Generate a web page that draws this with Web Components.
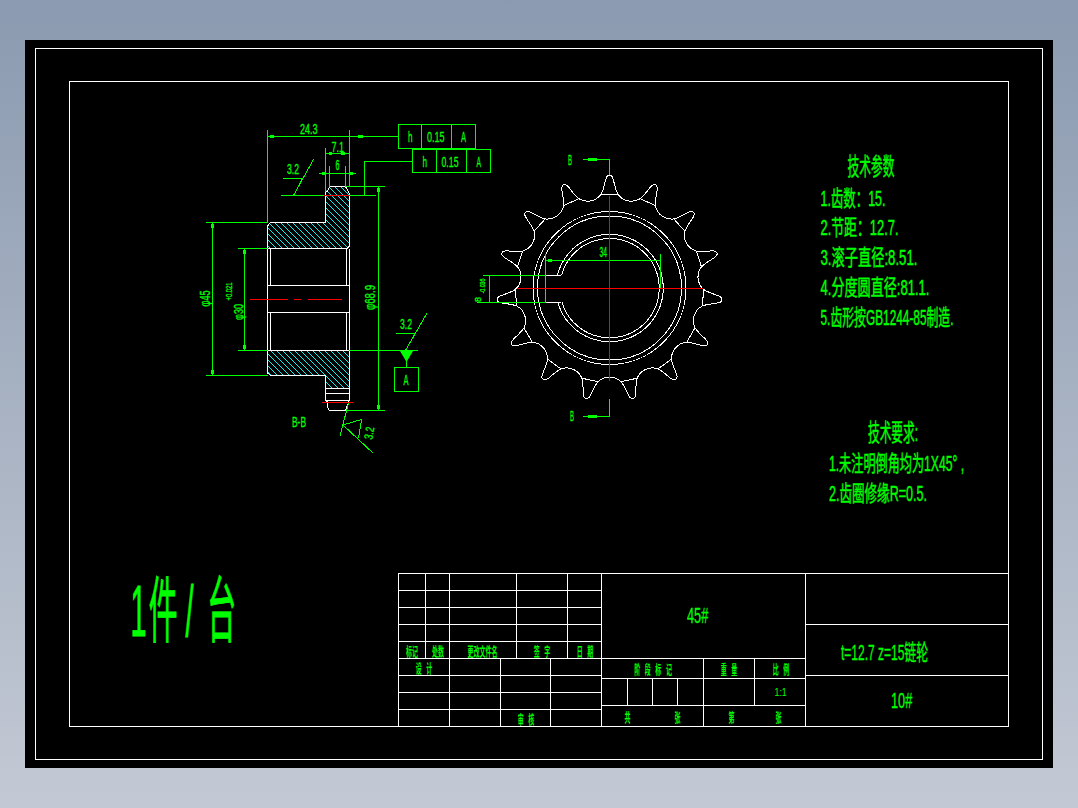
<!DOCTYPE html>
<html lang="zh">
<head>
<meta charset="utf-8">
<title>t=12.7 z=15 链轮</title>
<style>
  html, body { margin: 0; height: 100%; overflow: hidden; }
  body {
    background: linear-gradient(180deg, #8b9ab0 0%, #c3c9d4 100%);
    font-family: "Liberation Sans", "Noto Sans CJK SC", sans-serif;
  }
</style>
</head>
<body>
<cad-viewport>
  <part-drawing></part-drawing>
  <div slot="bottom-left"><batch-stamp></batch-stamp></div>
  <title-block slot="bottom-right"></title-block>
</cad-viewport>

<script>
const GREEN = '#00ff00';

// window background, black sheet and the two white frames
class CadViewport extends HTMLElement {
    constructor() {
        super();
        const shadow = this.attachShadow({ mode: 'open' });
        shadow.innerHTML = `
            <style>
                :host { display: block; padding: 40px 25px; height: 808px; box-sizing: border-box; }
                .sheet { background: #000; padding: 8px 10px; height: 728px; box-sizing: border-box; }
                .outer { border: 1px solid #fff; height: 712px; box-sizing: border-box; padding: 32px 33px; }
                .inner { border: 1px solid #fff; height: 646px; box-sizing: border-box; display: flex; flex-direction: column; }
                .bottom { display: flex; height: 153px; }
                .left { flex: 1; }
            </style>
            <div class="sheet">
                <div class="outer">
                    <div class="inner">
                        <slot></slot>
                        <div class="bottom">
                            <div class="left"><slot name="bottom-left"></slot></div>
                            <slot name="bottom-right"></slot>
                        </div>
                    </div>
                </div>
            </div>
        `;
    }
}

// svg text squeezed to the measured width, the way the cad font looks
function txt(str, x, base, width, size, opts = {}) {
    const rot = opts.rot ? ` transform="rotate(${opts.rot} ${opts.rx} ${opts.ry})"` : '';
    const sw = opts.sw === undefined ? 0.3 : opts.sw;
    return `<text x="${x}" y="${base}" font-size="${size}" textLength="${width}" lengthAdjust="spacingAndGlyphs" fill="${GREEN}" stroke="${GREEN}" stroke-width="${sw}"${rot}>${str}</text>`;
}

function note(str, x, base, width, size) {
    return `<text transform="translate(${x} ${base}) scale(.5 1)" font-size="${size}" textLength="${width * 2}" lengthAdjust="spacingAndGlyphs" fill="${GREEN}" stroke="${GREEN}" stroke-width=".45">${str}</text>`;
}

// text turned to read bottom to top, given by its centre
function vtxt(str, cx, cy, len, size, deg = -90) {
    const x = cx - len / 2;
    const y = cy + size * 0.36;
    return txt(str, x, y, len, size, { rot: deg, rx: cx, ry: cy });
}

function lines(list) {
    return list.map(l => `M${l[0]} ${l[1]}L${l.slice(2).join(' ')}`).join('');
}

function sprocketPaths(cx, cy) {
    const pt = (k, u, v) => {
        const a = (90 - 24 * k) * Math.PI / 180;
        const x = cx + u * Math.sin(a) + v * Math.cos(a);
        const y = cy + u * Math.cos(a) - v * Math.sin(a);
        return x.toFixed(2) + ' ' + y.toFixed(2);
    };
    let teeth = '';
    let chords = '';
    for (let k = 0; k < 15; k++) {
        teeth += (k === 0 ? 'M' : 'L') + pt(k, -8.3, 94);
        teeth += 'C' + pt(k, -6, 98) + ' ' + pt(k, -5, 104) + ' ' + pt(k, -3.6, 109);
        teeth += 'Q' + pt(k, -2.6, 113) + ' ' + pt(k, 0, 113);
        teeth += 'Q' + pt(k, 2.6, 113) + ' ' + pt(k, 3.6, 109);
        teeth += 'C' + pt(k, 5, 104) + ' ' + pt(k, 6, 98) + ' ' + pt(k, 8.3, 94);
        teeth += 'A16.5 16.5 0 0 0 ' + pt(k + 1, -8.3, 94);
        chords += 'M' + pt(k, -8.3, 94) + 'L' + pt(k, 8.3, 94);
    }
    return teeth + 'Z' + chords;
}

// section hatch: 45 degree lines, clipped to the section outline
function hatchLines() {
    let d = '';
    for (let c = -166; c < 130; c += 6) {
        d += `M260 ${260 + c}L360 ${360 + c}`;
    }
    return d;
}

class PartDrawing extends HTMLElement {
    constructor() {
        super();
        const shadow = this.attachShadow({ mode: 'open' });
        const cx = 609.5, cy = 288;

        const hatchTop = 'M267.5 226L270.5 222.5H325.5V192L329.5 186.5H345.5L349.5 194V246L347 248.5H267.5Z';
        const hatchBottom = 'M267.5 350.5H349.5V388.5H325.5V375.5H270.5L267.5 373Z';

        const whiteSection = [
            [267.5, 226, 270.5, 222.5, 325.5, 222.5, 325.5, 192, 327.5, 191.5, 329.5, 186.5, 345.5, 186.5, 349.5, 194, 349.5, 246, 347, 248.5, 267.5, 248.5, 267.5, 226],
            [267.5, 248.5, 267.5, 350.5],
            [270.5, 248.5, 270.5, 285.5],
            [270.5, 312.5, 270.5, 350.5],
            [346.5, 248.5, 346.5, 285.5],
            [346.5, 312.5, 346.5, 350.5],
            [349.5, 248.5, 349.5, 400],
            [267.5, 285.5, 349.5, 285.5],
            [267.5, 312.5, 349.5, 312.5],
            [267.5, 350.5, 349.5, 350.5],
            [267.5, 350.5, 267.5, 373, 270.5, 375.5, 325.5, 375.5, 325.5, 400, 327.5, 402, 327.5, 407.5, 329.5, 410.5, 345.5, 410.5, 348, 404, 349.5, 400],
            [325.5, 388.5, 349.5, 388.5],
            [325.5, 393.5, 349.5, 393.5],
            [325.5, 400, 349.5, 400]
        ];

        const green = [
            [267.5, 130, 267.5, 222.5], [267.5, 136.5, 398.5, 136.5],
            [349.5, 130, 349.5, 186.5], [325.5, 148, 325.5, 192],
            [325.5, 153.5, 349.5, 153.5], [319, 173.5, 356, 173.5],
            [329.5, 166, 329.5, 186.5], [345.5, 166, 345.5, 186.5],
            [412.5, 161.5, 364.5, 161.5, 364.5, 195.5],
            [346, 186.5, 385, 186.5], [281, 195.5, 376, 195.5],
            [283, 178.5, 302.5, 178.5, 293.5, 195.5, 313.5, 159.5],
            [378.5, 186.5, 378.5, 410.5], [346, 410.5, 385, 410.5],
            [212.5, 222.5, 212.5, 375.5], [206, 222.5, 268, 222.5], [206, 375.5, 268, 375.5],
            [244.5, 248.5, 244.5, 350.5], [238, 248.5, 268, 248.5], [238, 350.5, 268, 350.5], [349, 350.5, 418, 350.5],
            [396, 333.5, 415, 333.5, 405.5, 350.5, 427, 313],
            [406.5, 361, 406.5, 367.5],
            [348.5, 403, 340, 436], [343, 425, 361.5, 419.5, 358.5, 438.5], [343, 425, 373.5, 453.5],
            // section marks and the dimensions on the gear view
            [583, 159.5, 609.5, 159.5, 609.5, 175], [609.5, 399, 609.5, 416.5, 583, 416.5],
            [545.5, 254, 545.5, 302.5], [545.5, 260.5, 660.5, 260.5], [660.5, 254, 660.5, 288],
            [483, 275.5, 545.5, 275.5], [477, 302.5, 545.5, 302.5], [489.5, 275.5, 489.5, 302.5]
        ];

        const ticks = [
            [270, 136.5, 274, 136.5], [358, 136.5, 363, 136.5],
            [329, 153.5, 332, 153.5], [341, 153.5, 345, 153.5],
            [322, 173.5, 326, 173.5], [349, 173.5, 353, 173.5],
            [212.5, 224, 212.5, 228], [212.5, 370, 212.5, 374],
            [244.5, 250, 244.5, 254], [244.5, 345, 244.5, 349],
            [378.5, 188, 378.5, 192], [378.5, 405, 378.5, 409],
            [548, 260.5, 552, 260.5],
            [588, 159.5, 597, 159.5], [588, 416.5, 597, 416.5]
        ];

        const red = [
            [323.5, 195.5, 349.5, 195.5], [322, 402.5, 353, 402.5],
            [250, 299.5, 288, 299.5], [294, 299.5, 301, 299.5], [308, 299.5, 342, 299.5],
            [516.5, 288.5, 703, 288.5], [609.5, 196, 609.5, 381]
        ];

        const labels = [
            txt('24.3', 300, 134, 17.5, 15),
            txt('7.1', 331.5, 151.5, 12.5, 15),
            txt('6', 335.5, 170, 4, 14),
            txt('3.2', 287, 174, 12, 15),
            txt('3.2', 400, 329, 12, 15),
            txt('B-B', 292, 426.5, 14, 14),
            txt('A', 403.5, 385, 5, 14),
            txt('h', 408, 142, 4.5, 15),
            txt('0.15', 427, 142, 17.5, 15),
            txt('A', 461, 142, 5, 15),
            txt('h', 422.5, 167, 4.5, 15),
            txt('0.15', 441.5, 167, 17, 15),
            txt('A', 476.5, 167, 4.5, 15),
            txt('34', 599.5, 257, 7.5, 15),
            txt('B', 568, 165, 4, 14),
            txt('B', 570, 421, 4, 14),
            vtxt('φ45', 204.5, 298.5, 16, 14),
            vtxt('φ30', 238, 312, 16, 13),
            vtxt('+0.021', 229, 291.5, 18, 9),
            vtxt('φ68.9', 370, 297.5, 25, 14),
            vtxt('-0.036', 482, 286, 15, 8),
            vtxt('8', 478, 299.5, 5, 9),
            vtxt('3.2', 369, 433, 12.5, 12, -80)
        ].join('');

        const notes = [
            note('技术参数', 847.5, 175, 47, 24),
            note('1.齿数：15.', 820.5, 206, 65, 22),
            note('2.节距：12.7.', 820.5, 235, 78, 22),
            note('3.滚子直径:8.51.', 820.5, 265, 97, 22),
            note('4.分度圆直径:81.1.', 820.5, 295, 109, 22),
            note('5.齿形按GB1244-85制造.', 820.5, 325, 133, 22),
            note('技术要求:', 868, 441, 50, 24),
            note('1.未注明倒角均为1X45° ,', 829, 471, 135, 22),
            note('2.齿圈修缘R=0.5.', 829, 501, 98, 22)
        ].join('');

        shadow.innerHTML = `
            <style>
                :host { display: block; height: 491px; }
                svg { display: block; overflow: visible; }
                text { font-family: "Liberation Sans", "Noto Sans CJK SC", sans-serif; white-space: pre; }
                .draw { fill: none; stroke-width: 1; shape-rendering: crispEdges; }
            </style>
            <svg width="938" height="491" viewBox="70 82 938 491">
                <defs>
                    <clipPath id="section"><path d="${hatchTop}${hatchBottom}"/></clipPath>
                </defs>
                <path class="draw" stroke="#11eeee" clip-path="url(#section)" d="${hatchLines()}"/>
                <path class="draw" stroke="#fff" d="${lines(whiteSection)}"/>
                <path class="draw" stroke="#fff" d="${sprocketPaths(cx, cy)}"/>
                <g class="draw" stroke="#fff">
                    <circle cx="${cx}" cy="${cy}" r="76.5"/>
                    <circle cx="${cx}" cy="${cy}" r="72"/>
                    <path d="M557.4 275.5A53.7 53.7 0 1 1 557.9 302.5M561.5 275.5A49.7 49.7 0 1 1 562 302.5M545.5 275.5H561M545.5 302.5H561"/>
                </g>
                <path class="draw" stroke="${GREEN}" d="${lines(green)}"/>
                <path class="draw" stroke="${GREEN}" d="${lines(ticks)}" style="stroke-width:2.6"/>
                <g class="draw" stroke="${GREEN}">
                    <rect x="398.5" y="124.5" width="77" height="24"/>
                    <path d="M421.5 124.5V148.5M451.5 124.5V148.5"/>
                    <rect x="412.5" y="149.5" width="78" height="23"/>
                    <path d="M436.5 149.5V172.5M466.5 149.5V172.5"/>
                    <rect x="394.5" y="367.5" width="24" height="24"/>
                </g>
                <path d="M400 351L413 351L406.5 362Z" fill="${GREEN}"/>
                <path class="draw" stroke="#ff0000" d="${lines(red)}"/>
                ${labels}
                ${notes}
            </svg>
        `;
    }
}

// the big "1件/台" written on the free part of the sheet
class BatchStamp extends HTMLElement {
    constructor() {
        super();
        const shadow = this.attachShadow({ mode: 'open' });
        shadow.innerHTML = `
            <style>
                :host { display: block; height: 153px; }
                svg { display: block; overflow: visible; }
                text { font-family: "Liberation Sans", "Noto Sans CJK SC", sans-serif; }
            </style>
            <svg width="328" height="153" viewBox="70 573 328 153">
                <text transform="scale(.4 1)" x="326 372 464 518" y="636" font-size="72" fill="${GREEN}" stroke="${GREEN}" stroke-width=".9">1件/台</text>
            </svg>
        `;
    }
}

class TitleBlock extends HTMLElement {
    constructor() {
        super();
        const shadow = this.attachShadow({ mode: 'open' });
        shadow.innerHTML = `
            <style>
                :host {
                    display: flex;
                    width: 610px;
                    height: 153px;
                    box-sizing: border-box;
                    border-top: 1px solid #fff;
                    border-left: 1px solid #fff;
                    color: ${GREEN};
                    font-family: "Liberation Sans", "Noto Sans CJK SC", sans-serif;
                }
                .left, .mid, .right { box-sizing: border-box; height: 152px; display: flex; flex-direction: column; }
                .left, .mid { border-right: 1px solid #fff; }
                .left { width: 203px; }
                .mid { width: 204px; }
                .right { width: 202px; }

                .grid { display: grid; }
                .sign { grid-template-columns: 27px 24px 67px 51px 34px; grid-auto-rows: 17px; }
                .design { grid-template-columns: 51px 51px 50px 51px; grid-template-rows: 17px 17px 17px 16px; }
                .material { grid-template-columns: 26px 25px 25px 26px 51px 51px; grid-template-rows: 85px 20px 27px 20px; }
                .drawing { grid-template-rows: 51px 51px 50px; }

                .grid > div {
                    display: flex;
                    align-items: center;
                    justify-content: center;
                    box-sizing: border-box;
                    border-right: 1px solid #fff;
                    border-bottom: 1px solid #fff;
                    min-width: 0;
                    white-space: nowrap;
                }
                .grid > .end { border-right: 0; }
                .grid > .last { border-bottom: 0; }
                .span2 { grid-column: span 2; }
                .span4 { grid-column: span 4; }
                .span6 { grid-column: span 6; }

                span { display: inline-block; font-size: 13px; font-weight: 700; transform: scaleX(.46); }
                .w { letter-spacing: 10px; padding-left: 10px; }
                .grid > .big { justify-content: flex-start; }
                .big span {
                    font-size: 22px;
                    font-weight: 400;
                    transform-origin: 0 50%;
                    -webkit-text-stroke: .3px ${GREEN};
                }
                .thin { font-size: 11px; font-weight: 400; transform: scaleX(.8); }
            </style>
            <div class="left">
                <div class="grid sign">
                    ${'<div></div>'.repeat(20)}
                    <div><span>标记</span></div><div><span>处数</span></div><div><span>更改文件名</span></div>
                    <div><span class="w">签字</span></div><div><span class="w">日期</span></div>
                </div>
                <div class="grid design">
                    <div><span class="w">设计</span></div><div></div><div></div><div class="end"></div>
                    <div></div><div></div><div></div><div class="end"></div>
                    <div></div><div></div><div></div><div class="end"></div>
                    <div class="last"></div><div class="last"></div><div class="last"><span class="w">审核</span></div><div class="last end"></div>
                </div>
            </div>
            <div class="mid">
                <div class="grid material">
                    <div class="span6 end big" style="padding-left:85px"><span style="transform:scaleX(.58)">45#</span></div>
                    <div class="span4"><span class="w">阶段标记</span></div><div><span class="w">重量</span></div><div class="end"><span class="w">比例</span></div>
                    <div></div><div></div><div></div><div></div><div></div><div class="end"><span class="thin">1:1</span></div>
                    <div class="span4 last" style="gap:36px"><span>共</span><span>张</span></div>
                    <div class="span2 last end" style="gap:34px"><span>第</span><span>张</span></div>
                </div>
            </div>
            <div class="right">
                <div class="grid drawing">
                    <div class="end"></div>
                    <div class="end big" style="padding-left:35px"><span style="transform:scaleX(.545)">t=12.7 z=15链轮</span></div>
                    <div class="end last big" style="padding-left:85px"><span style="transform:scaleX(.58)">10#</span></div>
                </div>
            </div>
        `;
    }
}

customElements.define('cad-viewport', CadViewport);
customElements.define('part-drawing', PartDrawing);
customElements.define('batch-stamp', BatchStamp);
customElements.define('title-block', TitleBlock);
</script>
</body>
</html>
